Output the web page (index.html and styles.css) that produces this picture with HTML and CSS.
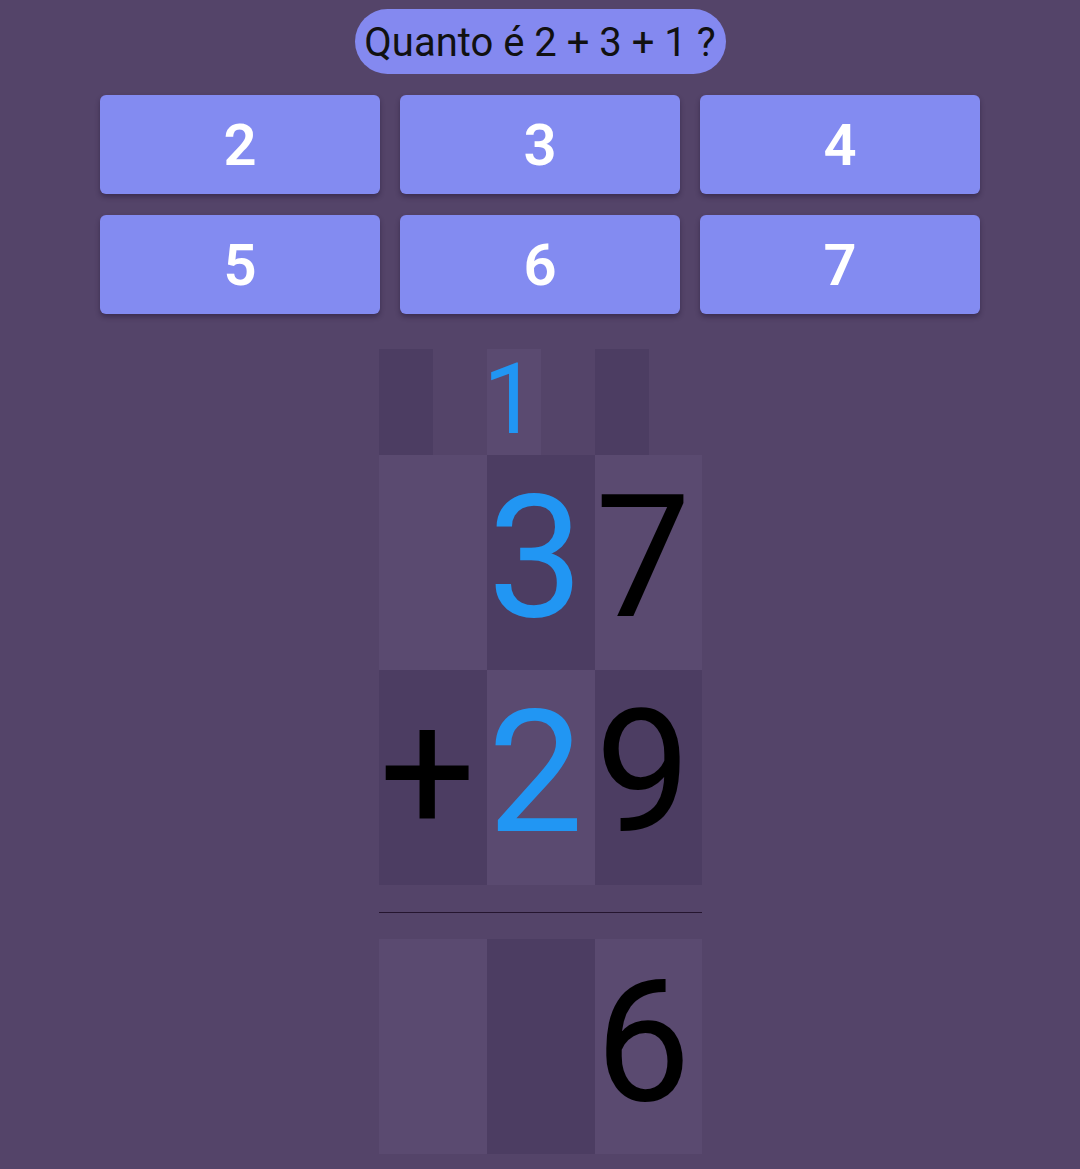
FILE: index.html
```html
<!DOCTYPE html>
<html lang="pt">
<head>
<meta charset="utf-8">
<link rel="stylesheet" href="styles.css">
</head>
<body>
<main class="app">
  <div class="question">Quanto é 2 + 3 + 1 ?</div>
  <div class="options">
    <button class="opt">2</button>
    <button class="opt">3</button>
    <button class="opt">4</button>
    <button class="opt">5</button>
    <button class="opt">6</button>
    <button class="opt">7</button>
  </div>
  <div class="sum">
    <div class="carry-row">
      <div class="col"><div class="carry dark"></div></div>
      <div class="col"><div class="carry light blue">1</div></div>
      <div class="col"><div class="carry dark"></div></div>
    </div>
    <div class="row">
      <div class="cell light"></div>
      <div class="cell dark blue">3</div>
      <div class="cell light">7</div>
    </div>
    <div class="row">
      <div class="cell dark">+</div>
      <div class="cell light blue">2</div>
      <div class="cell dark">9</div>
    </div>
    <div class="rule"></div>
    <div class="row">
      <div class="cell light"></div>
      <div class="cell dark"></div>
      <div class="cell light">6</div>
    </div>
  </div>
</main>
</body>
</html>
```
FILE: styles.css
```css
html, body {
  margin: 0;
  padding: 0;
  background: #544469;
  height: 100%;
}
.app {
  display: flex;
  flex-direction: column;
  align-items: center;
  font-family: Roboto, "Liberation Sans", sans-serif;
}
.question {
  margin-top: 9px;
  width: 371px;
  height: 65px;
  box-sizing: border-box;
  border-radius: 33px;
  background: #8489f0;
  color: #111;
  font-size: 40px;
  display: flex;
  align-items: center;
  justify-content: center;
  padding-top: 2px;
}
.options {
  margin-top: 21px;
  display: grid;
  grid-template-columns: repeat(3, 280px);
  gap: 21px 20px;
}
.opt {
  height: 99px;
  border: none;
  border-radius: 6px;
  background: #838bf1;
  color: #fff;
  font-family: Roboto, "Liberation Sans", sans-serif;
  font-weight: 600;
  font-size: 58px;
  box-shadow: 0 3px 5px rgba(30, 20, 50, 0.45);
  padding: 0;
}
.sum {
  margin-top: 35px;
  display: flex;
  flex-direction: column;
  width: 323px;
}
.carry-row {
  display: grid;
  grid-template-columns: 108px 108px 107px;
  height: 106px;
}
.carry {
  width: 54px;
  height: 106px;
  display: flex;
  align-items: center;
  justify-content: center;
  font-size: 98px;
  line-height: 1;
}
.row {
  display: grid;
  grid-template-columns: 108px 108px 107px;
  height: 215px;
}
.cell {
  display: flex;
  align-items: center;
  justify-content: center;
  font-size: 170px;
  line-height: 1;
  color: #000;
  padding: 0 10px 10px 0;
  box-sizing: border-box;
}
.dark { background: #4c3d62; }
.light { background: #5a4a70; }
.blue { color: #2196f3; }
.carry.blue { padding: 0 6px 4px 0; box-sizing: border-box; }
.rule {
  height: 1px;
  background: #25152f;
  margin: 27px 0 26px;
}
```
